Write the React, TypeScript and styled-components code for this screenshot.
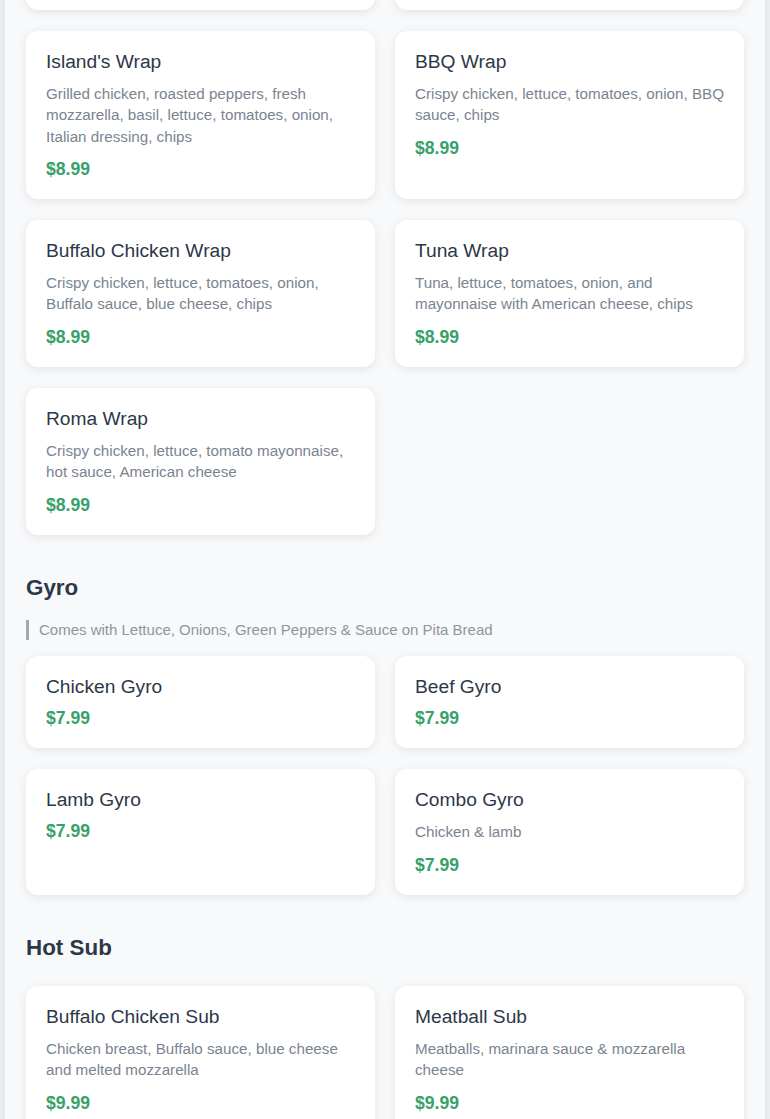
import React from "react";
import styled, { createGlobalStyle } from "styled-components";

const GlobalStyle = createGlobalStyle`
  * {
    box-sizing: border-box;
  }

  body {
    margin: 0;
    background-color: #eceef1;
    font-family: "Liberation Sans", Arial, sans-serif;
  }
`;

// page is shown scrolled into the wraps section
const Page = styled.div`
  padding: 0 5px;
  margin-top: -240px;
`;

const Panel = styled.div`
  background-color: #f8f9fa;
  padding: 21px 21px 40px;
  box-shadow: 0 0 8px rgba(0, 0, 0, 0.06);
`;

const Section = styled.section`
  & + & {
    margin-top: 40px;
  }
`;

const SectionTitle = styled.h2<{ $hasNote?: boolean }>`
  margin: 0 0 ${(props) => (props.$hasNote ? "19px" : "24px")};
  font-size: 22.4px;
  line-height: 1.2;
  font-weight: bold;
  color: #2d3748;
`;

const SectionNote = styled.p`
  margin: 0 0 16px;
  padding-left: 10px;
  border-left: 3px solid #a0a8b2;
  font-size: 15px;
  line-height: 20px;
  color: #8d969f;
`;

const ItemGrid = styled.div`
  display: grid;
  grid-template-columns: repeat(2, 1fr);
  gap: 21px 20px;
`;

const ItemCard = styled.div`
  background-color: #fff;
  padding: 20px;
  border-radius: 12px;
  box-shadow: 0 2px 10px rgba(0, 0, 0, 0.09);
`;

const ItemName = styled.h3`
  margin: 0 0 11px;
  font-size: 19.2px;
  line-height: 21px;
  font-weight: normal;
  color: #2d3748;
`;

const ItemDesc = styled.p`
  margin: 0 0 12px;
  font-size: 15.2px;
  line-height: 21.4px;
  color: #7a8491;
`;

const ItemPrice = styled.div`
  font-size: 17.6px;
  line-height: 20px;
  font-weight: bold;
  color: #38a169;
`;

type MenuItem = {
  name: string;
  desc?: string;
  price: string;
};

type MenuSection = {
  title: string;
  note?: string;
  items: MenuItem[];
};

const menu: MenuSection[] = [
  {
    title: "Wraps",
    note: "All wraps served on a flour tortilla",
    items: [
      {
        name: "Chicken Caesar Wrap",
        desc: "Grilled chicken, romaine lettuce, parmesan cheese, Caesar dressing, chips",
        price: "$8.99",
      },
      {
        name: "Turkey Club Wrap",
        desc: "Turkey, bacon, lettuce, tomatoes, mayonnaise, American cheese, chips",
        price: "$8.99",
      },
      {
        name: "Island's Wrap",
        desc: "Grilled chicken, roasted peppers, fresh mozzarella, basil, lettuce, tomatoes, onion, Italian dressing, chips",
        price: "$8.99",
      },
      {
        name: "BBQ Wrap",
        desc: "Crispy chicken, lettuce, tomatoes, onion, BBQ sauce, chips",
        price: "$8.99",
      },
      {
        name: "Buffalo Chicken Wrap",
        desc: "Crispy chicken, lettuce, tomatoes, onion, Buffalo sauce, blue cheese, chips",
        price: "$8.99",
      },
      {
        name: "Tuna Wrap",
        desc: "Tuna, lettuce, tomatoes, onion, and mayonnaise with American cheese, chips",
        price: "$8.99",
      },
      {
        name: "Roma Wrap",
        desc: "Crispy chicken, lettuce, tomato mayonnaise, hot sauce, American cheese",
        price: "$8.99",
      },
    ],
  },
  {
    title: "Gyro",
    note: "Comes with Lettuce, Onions, Green Peppers & Sauce on Pita Bread",
    items: [
      { name: "Chicken Gyro", price: "$7.99" },
      { name: "Beef Gyro", price: "$7.99" },
      { name: "Lamb Gyro", price: "$7.99" },
      { name: "Combo Gyro", desc: "Chicken & lamb", price: "$7.99" },
    ],
  },
  {
    title: "Hot Sub",
    items: [
      {
        name: "Buffalo Chicken Sub",
        desc: "Chicken breast, Buffalo sauce, blue cheese and melted mozzarella",
        price: "$9.99",
      },
      {
        name: "Meatball Sub",
        desc: "Meatballs, marinara sauce & mozzarella cheese",
        price: "$9.99",
      },
      {
        name: "Chicken Parmesan Sub",
        desc: "Breaded chicken, marinara sauce & melted mozzarella",
        price: "$9.99",
      },
      {
        name: "Philly Cheese Steak",
        desc: "Steak, onions, green peppers & American cheese",
        price: "$9.99",
      },
    ],
  },
];

const App: React.FC = () => {
  return (
    <>
      <GlobalStyle />
      <Page>
        <Panel>
          {menu.map((section) => (
            <Section key={section.title}>
              <SectionTitle $hasNote={!!section.note}>{section.title}</SectionTitle>
              {section.note && <SectionNote>{section.note}</SectionNote>}
              <ItemGrid>
                {section.items.map((item) => (
                  <ItemCard key={item.name}>
                    <ItemName>{item.name}</ItemName>
                    {item.desc && <ItemDesc>{item.desc}</ItemDesc>}
                    <ItemPrice>{item.price}</ItemPrice>
                  </ItemCard>
                ))}
              </ItemGrid>
            </Section>
          ))}
        </Panel>
      </Page>
    </>
  );
};

export default App;
